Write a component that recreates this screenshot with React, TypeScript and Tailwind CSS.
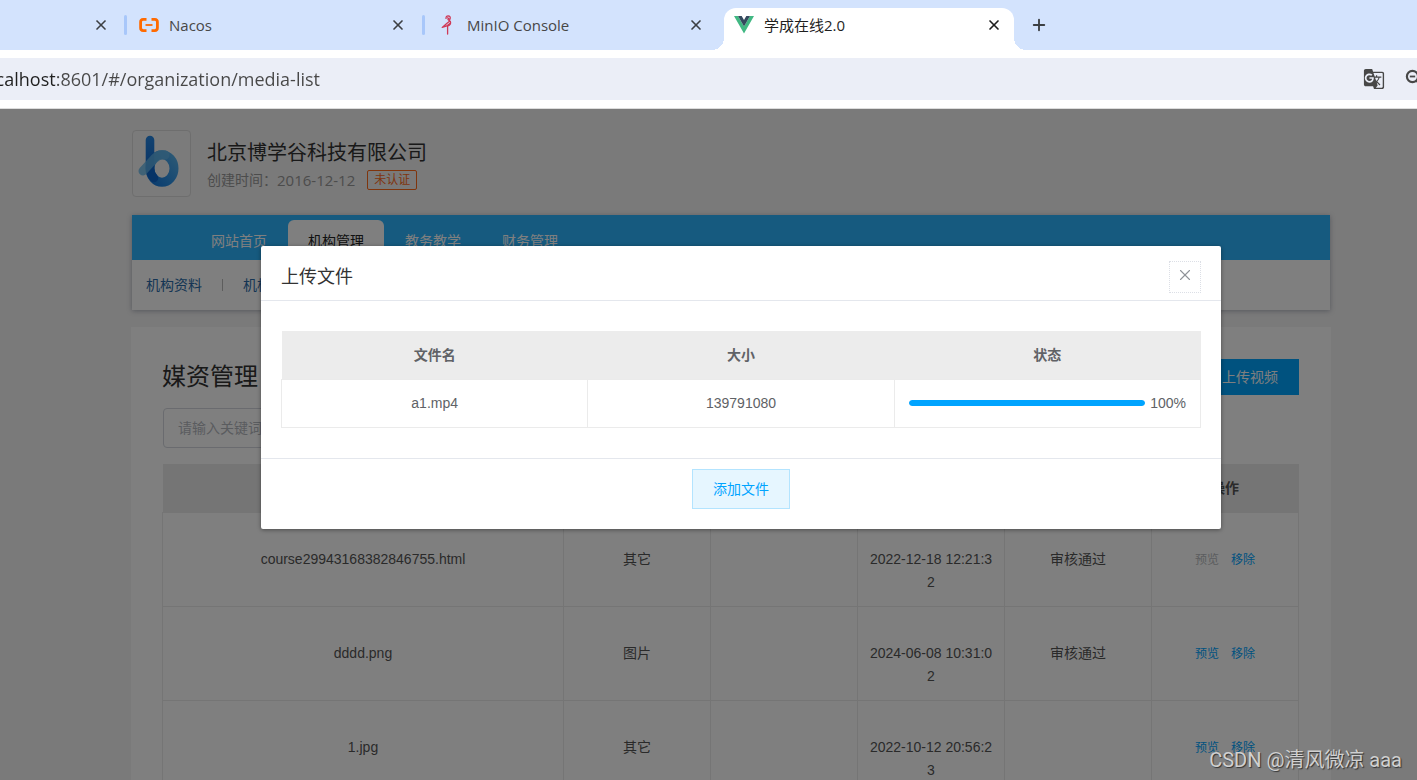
import React, { useState } from 'react';
import { Plus, X } from 'lucide-react';
import { MdGTranslate } from 'react-icons/md';

interface MediaFile {
  name: string;
  type: string;
  tags: string;
  uploadedAt: string;
  status: string;
  canPreview: boolean;
}

const NAV_ITEMS = ['网站首页', '机构管理', '教务教学', '财务管理'];
const SUB_NAV_ITEMS = ['机构资料', '机构认证'];
const UPLOADS = [{ name: 'a1.mp4', size: 139791080, percent: 100 }];

const MEDIA_FILES: MediaFile[] = [
  { name: 'course29943168382846755.html', type: '其它', tags: '', uploadedAt: '2022-12-18 12:21:32', status: '审核通过', canPreview: false },
  { name: 'dddd.png', type: '图片', tags: '', uploadedAt: '2024-06-08 10:31:02', status: '审核通过', canPreview: true },
  { name: '1.jpg', type: '其它', tags: '', uploadedAt: '2022-10-12 20:56:23', status: '', canPreview: true },
];

const NacosIcon = () => (
  <svg width="20" height="14" viewBox="0 0 20 14" fill="none" stroke="#ff6a00">
    <path d="M7.5 1.4H4.2Q1.6 1.6 1.6 4v6q0 2.4 2.6 2.6h3.3" strokeWidth="2.8" />
    <path d="M12.5 1.4h3.3q2.6.2 2.6 2.6v6q0 2.4-2.6 2.6h-3.3" strokeWidth="2.8" />
    <path d="M6.5 7h7" strokeWidth="1.8" />
  </svg>
);

const MinioIcon = () => (
  <svg width="12" height="20" viewBox="0 0 12 20" fill="none" stroke="#cf3a58" strokeWidth="1.3" strokeLinecap="round" strokeLinejoin="round">
    <path d="M5 3.4Q5 .8 7.2.8 9.6 1 9.2 3.4L8.8 4.6 6.6 2.8" />
    <path d="M7 4.4L9.4 6.6Q10.4 9.4 6.6 11.2V19" />
    <path d="M8.6 6.2L6 8.2 1.2 12.4 5.2 11.2 9 8.4" />
  </svg>
);

const VueIcon = () => (
  <svg width="20" height="18" viewBox="0 0 20 18">
    <path d="M0 0h4l6 10.4L16 0h4L10 17.4z" fill="#41b883" />
    <path d="M4 0h3.7L10 4l2.3-4H16l-6 10.4z" fill="#34495e" />
  </svg>
);

const ZoomOutIcon = () => (
  <svg width="20" height="20" viewBox="0 0 20 20" fill="none" stroke="#474747" strokeWidth="2.2">
    <circle cx="7.5" cy="7.5" r="5.6" />
    <path d="M4.8 7.5h5.4" strokeWidth="1.8" />
    <path d="M11.6 11.6l6 6" strokeWidth="2.6" />
  </svg>
);

const CompanyLogo = () => (
  <svg width="57" height="65" viewBox="0 0 57 65" fill="none">
    <defs>
      <linearGradient id="bowl" x1="15" y1="50" x2="46" y2="26" gradientUnits="userSpaceOnUse">
        <stop offset="0" stopColor="#1478dc" />
        <stop offset="0.4" stopColor="#2a8fe6" />
        <stop offset="1" stopColor="#5cb4ea" />
      </linearGradient>
      <linearGradient id="stem" x1="17" y1="5" x2="17" y2="40" gradientUnits="userSpaceOnUse">
        <stop offset="0" stopColor="#2586e2" />
        <stop offset="1" stopColor="#0f66cc" />
      </linearGradient>
    </defs>
    <ellipse cx="29" cy="37.5" rx="12" ry="13.8" stroke="url(#bowl)" strokeWidth="9" />
    <path d="M17 9v28q0 6 4 10" stroke="url(#stem)" strokeWidth="8.6" strokeLinecap="round" />
    <path d="M10 40L21 28q5-5 11-4" stroke="#63b7ea" strokeOpacity="0.8" strokeWidth="9" strokeLinecap="round" />
  </svg>
);

interface TabProps {
  icon: React.ReactNode;
  title: string;
}

const BrowserTab: React.FC<TabProps> = ({ icon, title }) => (
  <div className="flex h-full w-[295px] shrink-0 items-center pl-3 pr-4">
    <span className="flex w-5 justify-center">{icon}</span>
    <span className="ml-2.5 flex-1 text-[15px] text-[#474747]">{title}</span>
    <button aria-label={`关闭 ${title}`}>
      <X size={16} strokeWidth={2.5} color="#3c3f43" />
    </button>
  </div>
);

const TabSeparator = () => <span className="h-5 w-[3px] shrink-0 rounded-full bg-[#a8c7fa]" />;

const BrowserChrome = () => (
  <header className="shrink-0 border-b border-[#dcdcdc] bg-white font-['Open_Sans','Noto_Sans_CJK_SC',sans-serif]">
    <div className="flex h-[50px] items-center overflow-hidden bg-[#d3e3fd]">
      <div className="flex w-[124px] shrink-0 justify-end pr-[15px]">
        <button aria-label="关闭标签页">
          <X size={16} strokeWidth={2.5} color="#3c3f43" />
        </button>
      </div>
      <TabSeparator />
      <BrowserTab icon={<NacosIcon />} title="Nacos" />
      <TabSeparator />
      <BrowserTab icon={<MinioIcon />} title="MinIO Console" />

      {/* Active tab with flared feet */}
      <div className="relative ml-1 flex h-[42px] w-[290px] shrink-0 items-center self-end rounded-t-xl bg-white pb-2 pl-2.5 pr-3">
        <span className="absolute -left-3 bottom-0 size-3 bg-[radial-gradient(circle_at_0_0,transparent_12px,#fff_12px)]" />
        <span className="absolute -right-3 bottom-0 size-3 bg-[radial-gradient(circle_at_100%_0,transparent_12px,#fff_12px)]" />
        <VueIcon />
        <span className="ml-2.5 flex-1 text-[15px] text-[#1f1f1f]">学成在线2.0</span>
        <button aria-label="关闭 学成在线2.0">
          <X size={16} strokeWidth={2.5} color="#1f1f1f" />
        </button>
      </div>
      <button className="ml-4" aria-label="新建标签页">
        <Plus size={18} strokeWidth={2.5} color="#3c3f43" />
      </button>
    </div>

    <div className="py-2">
      <div className="flex h-[42px] items-center justify-between overflow-hidden bg-[#ebeef7]">
        <div className="flex w-80 justify-end overflow-hidden">
          <input
            aria-label="地址栏"
            readOnly
            value="localhost:8601/#/organization/media-list"
            className="w-[380px] shrink-0 bg-[linear-gradient(90deg,#1f1f1f_116px,#474747_116px)] bg-clip-text text-right text-[18px] text-transparent outline-none"
          />
        </div>
        <div className="-mr-2 flex items-center gap-5">
          <button aria-label="翻译此页">
            <MdGTranslate size={22} color="#474747" />
          </button>
          <button aria-label="缩放">
            <ZoomOutIcon />
          </button>
        </div>
      </div>
    </div>
  </header>
);

const OrganizationHeader = () => (
  <div className="flex gap-4 px-px">
    <div className="flex h-[67px] w-[59px] items-center justify-center rounded border border-[#dcdcdc] bg-[#f7f7f7]">
      <CompanyLogo />
    </div>
    <div className="pt-[7px]">
      <h1 className="text-xl leading-8 text-[#333]">北京博学谷科技有限公司</h1>
      <div className="flex items-center text-sm leading-[22px] text-[#999]">
        创建时间：
        <time className="font-['Open_Sans',sans-serif] text-[15px]">2016-12-12</time>
        <span className="ml-3 h-5 rounded-xs border border-[#ff6a1a] px-1.5 text-xs leading-[18px] text-[#ff6a1a]">未认证</span>
      </div>
    </div>
  </div>
);

const OrganizationNav = () => (
  <nav className="mx-px mt-[18px] bg-white shadow-[0_1px_5px_rgba(40,50,80,0.35)]">
    <div className="flex h-[45px] items-end gap-px bg-[#2cb5ff] pl-[59px]">
      {NAV_ITEMS.map((item) => (
        <a
          key={item}
          href="#/organization"
          className={`h-10 rounded-t-md px-5 text-sm leading-[42px] ${item === '机构管理' ? 'bg-white text-[#222]' : 'text-white'}`}
        >
          {item}
        </a>
      ))}
    </div>
    <div className="flex h-[50px] items-center pl-3.5 text-sm text-[#2a6ba8]">
      {SUB_NAV_ITEMS.map((item, i) => (
        <React.Fragment key={item}>
          {i > 0 && <span className="mx-5 h-3 w-px bg-[#bbb]" />}
          <a href="#/organization">{item}</a>
        </React.Fragment>
      ))}
    </div>
  </nav>
);

const MediaTable = () => (
  <table className="mt-4 w-full table-fixed border-collapse text-center text-sm text-[#555]">
    <colgroup>
      <col />
      <col className="w-[147px]" />
      <col className="w-[147px]" />
      <col className="w-[147px]" />
      <col className="w-[147px]" />
      <col className="w-[147px]" />
    </colgroup>
    <thead>
      <tr className="h-12 bg-[#ebebeb]">
        {['文件名', '文件类型', '标签', '上传时间', '状态', '操作'].map((title) => (
          <th key={title} className="font-bold">{title}</th>
        ))}
      </tr>
    </thead>
    <tbody>
      {MEDIA_FILES.map((file) => (
        <tr key={file.name} className="h-[94px] align-top leading-[23px] *:border *:border-[#ebebeb] *:px-2.5 *:pt-[35px]">
          <td>{file.name}</td>
          <td>{file.type}</td>
          <td>{file.tags}</td>
          <td className="break-all">{file.uploadedAt}</td>
          <td>{file.status}</td>
          <td>
            <div className="flex justify-center gap-3 text-xs leading-6 text-[#00a4ff]">
              <button disabled={!file.canPreview} className="disabled:text-[#b8bbc0]">预览</button>
              <button>移除</button>
            </div>
          </td>
        </tr>
      ))}
    </tbody>
  </table>
);

const MediaList = () => (
  <section className="mt-[17px] bg-white p-8 pl-[31px]">
    <div className="flex items-center justify-between">
      <h2 className="text-2xl leading-9 text-[#333]">媒资管理</h2>
      <button className="h-9 bg-[#00a4ff] px-[21px] text-sm text-white">上传视频</button>
    </div>
    <input
      aria-label="关键词"
      placeholder="请输入关键词"
      className="ml-px mt-[13px] block h-10 w-[300px] rounded border border-[#d4d7de] px-3.5 text-sm placeholder:text-[#b5b8bf]"
    />
    <MediaTable />
  </section>
);

interface UploadDialogProps {
  onClose: () => void;
}

const UploadDialog: React.FC<UploadDialogProps> = ({ onClose }) => (
  <div className="absolute inset-0 bg-black/50 pl-[261px] pr-[196px] pt-[137px]">
    <div role="dialog" aria-labelledby="upload-title" className="rounded-xs bg-white shadow-[0_1px_4px_rgba(0,0,0,0.4)]">
      <div className="flex items-center justify-between border-b border-[#e4e7ed] px-5 pb-[7px] pt-[15px]">
        <h2 id="upload-title" className="text-lg leading-8 text-[#333]">上传文件</h2>
        <button
          aria-label="关闭"
          onClick={onClose}
          className="flex size-8 justify-center border border-dotted border-[#dcdfe6] pt-1"
        >
          <X size={18} strokeWidth={1.5} color="#909399" />
        </button>
      </div>

      <div className="px-5 py-[30px]">
        <table className="w-full table-fixed border-collapse text-center text-sm text-[#606266]">
          <thead>
            <tr className="h-12 bg-[#ececec]">
              <th className="font-bold">文件名</th>
              <th className="font-bold">大小</th>
              <th className="font-bold">状态</th>
            </tr>
          </thead>
          <tbody>
            {UPLOADS.map((file) => (
              <tr key={file.name} className="h-12 *:border *:border-[#ebebeb]">
                <td>{file.name}</td>
                <td>{file.size}</td>
                <td className="px-3.5">
                  <div className="flex items-center gap-[5px]">
                    <div
                      role="progressbar"
                      aria-valuenow={file.percent}
                      className="h-1.5 flex-1 overflow-hidden rounded-full bg-[#ebeef5]"
                    >
                      <div className="h-full rounded-full bg-[#00a4ff]" style={{ width: `${file.percent}%` }} />
                    </div>
                    <span>{file.percent}%</span>
                  </div>
                </td>
              </tr>
            ))}
          </tbody>
        </table>
      </div>

      <div className="flex justify-center border-t border-[#e4e7ed] pb-5 pt-2.5">
        <button className="h-10 border border-[#b3e4ff] bg-[#e6f6ff] px-5 text-sm text-[#00a4ff]">添加文件</button>
      </div>
    </div>
  </div>
);

export default function App() {
  const [dialogOpen, setDialogOpen] = useState(true);

  return (
    <div className="flex h-screen flex-col overflow-hidden font-['Liberation_Sans','Noto_Sans_CJK_SC',sans-serif]">
      <BrowserChrome />
      <main className="relative flex-1 overflow-hidden bg-[#f4f4f4]">
        <div className="pl-[131px] pr-[86px] pt-[21px]">
          <OrganizationHeader />
          <OrganizationNav />
          <MediaList />
        </div>
        {dialogOpen && <UploadDialog onClose={() => setDialogOpen(false)} />}
        <p className="absolute bottom-1 right-[15px] font-[Roboto,'Noto_Sans_CJK_SC',sans-serif] text-xl leading-8 text-[#d0d0d0] [text-shadow:1px_1px_1px_rgba(0,0,0,0.6)]">
          CSDN @清风微凉 aaa
        </p>
      </main>
    </div>
  );
}
